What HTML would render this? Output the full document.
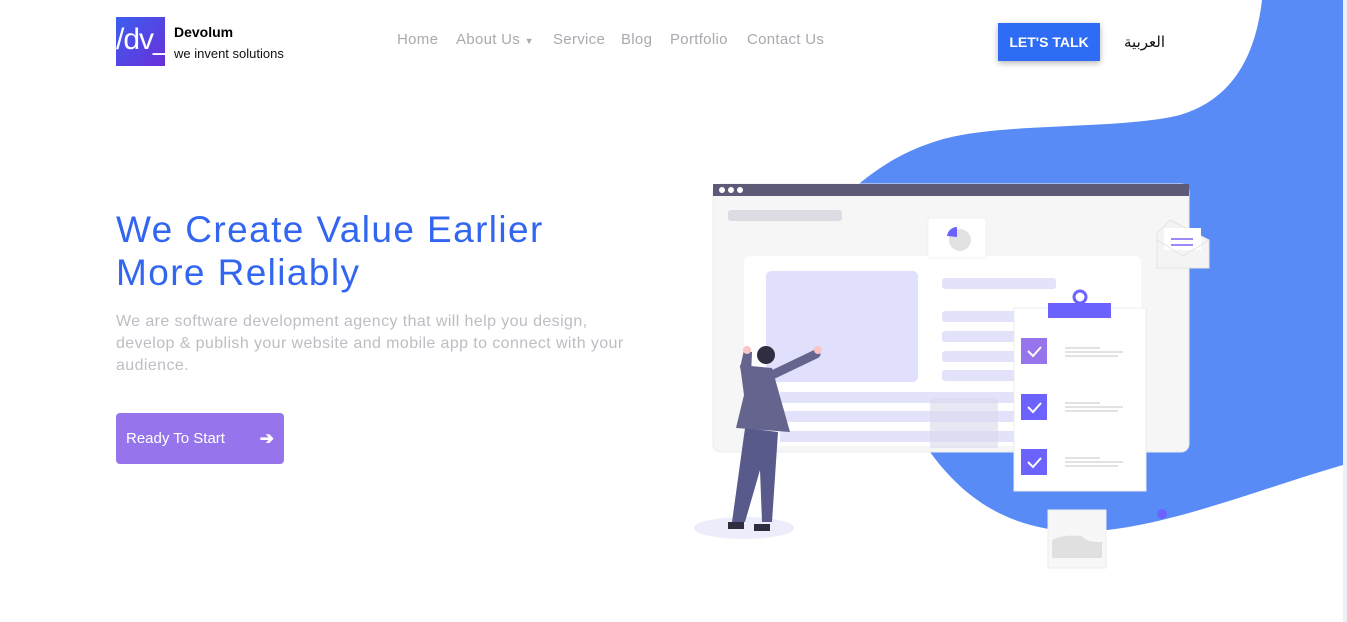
<!DOCTYPE html>
<html><head><meta charset="utf-8"><style>
*{margin:0;padding:0;box-sizing:border-box}
body{width:1347px;height:622px;overflow:hidden;background:#fff;font-family:"Liberation Sans",sans-serif;position:relative}
.abs{position:absolute}
.nav a{position:absolute;top:31px;font-size:15px;color:#a9a9b0;text-decoration:none;white-space:nowrap;letter-spacing:.3px}
</style></head><body>
<svg class="abs" style="left:0;top:0" width="1347" height="622">
<rect x="1343" y="0" width="4" height="622" fill="#eef0f4"/>
<path d="M1262,0 C1255,60 1230,100 1180,115 C1120,130 1000,122 940,140 C880,158 850,190 800,240 C760,320 860,410 930,452 C965,500 1010,530 1080,532 C1160,530 1250,492 1343,465 L1343,0 Z" fill="#598bf6"/>
</svg>
<div class="abs" style="left:116px;top:17px;width:49px;height:49px;background:linear-gradient(135deg,#3b5ef0,#6a2fd8);color:#fff;font-size:30px;line-height:46px;letter-spacing:-1px;overflow:hidden">/dv_</div>
<div class="abs" style="left:174px;top:24px;font-size:14px;font-weight:bold;color:#000">Devolum</div>
<div class="abs" style="left:174px;top:46px;font-size:13px;color:#111">we invent solutions</div>
<div class="nav">
<a style="left:397px">Home</a>
<a style="left:456px">About Us <span style="font-size:9px">▼</span></a>
<a style="left:553px">Service</a>
<a style="left:621px">Blog</a>
<a style="left:670px">Portfolio</a>
<a style="left:747px">Contact Us</a>
</div>
<div class="abs" style="left:998px;top:23px;width:102px;height:38px;background:#2f6cf5;color:#fff;font-weight:bold;font-size:14px;text-align:center;line-height:38px;box-shadow:0 2px 6px rgba(0,0,0,.3)">LET'S TALK</div>
<div class="abs" style="left:1124px;top:33px;font-size:15px;color:#111;font-family:'DejaVu Sans',sans-serif">العربية</div>
<div class="abs" style="left:116px;top:208px;font-size:37px;line-height:43px;color:#3366f0;letter-spacing:1.4px;white-space:nowrap">We Create Value Earlier<br>More Reliably</div>
<div class="abs" style="left:116px;top:311px;width:520px;font-size:16px;line-height:22px;color:#bdbdc4;letter-spacing:.4px">We are software development agency that will help you design, develop &amp; publish your website and mobile app to connect with your audience.</div>
<div class="abs" style="left:116px;top:413px;width:168px;height:51px;background:#9674ec;border-radius:4px;color:#fff;font-size:15px;line-height:51px;padding-left:10px">Ready To Start<span style="position:absolute;right:10px;font-weight:bold;font-size:17px">➔</span></div>
<svg class="abs" style="left:690px;top:170px" width="540" height="400">
<rect x="23" y="14" width="476" height="268" rx="8" fill="#f6f6f6" stroke="#ececec"/>
<rect x="23" y="14" width="476" height="12" fill="#5d5a77"/>
<circle cx="32" cy="20" r="3" fill="#fff"/><circle cx="41" cy="20" r="3" fill="#fff"/><circle cx="50" cy="20" r="3" fill="#fff"/>
<rect x="38" y="40" width="114" height="11" rx="3" fill="#dcdce2"/>
<rect x="54" y="86" width="397" height="190" rx="6" fill="#fff"/>
<rect x="76" y="101" width="152" height="111" rx="5" fill="#e0e0fc"/>
<rect x="252" y="108" width="114" height="11" rx="3" fill="#e2e2fb"/>
<rect x="252" y="141" width="80" height="11" rx="3" fill="#e2e2fb"/>
<rect x="252" y="161" width="80" height="11" rx="3" fill="#e2e2fb"/>
<rect x="252" y="181" width="80" height="11" rx="3" fill="#e2e2fb"/>
<rect x="252" y="200" width="80" height="11" rx="3" fill="#e2e2fb"/>
<rect x="90" y="222" width="240" height="11" fill="#e2e2fb"/>
<rect x="90" y="241" width="240" height="11" fill="#e2e2fb"/>
<rect x="90" y="261" width="240" height="11" fill="#e2e2fb"/>
<rect x="240" y="228" width="68" height="50" fill="#d8d8ef" opacity=".6"/>
<rect x="238" y="48" width="58" height="40" fill="#fff" stroke="#f0f0f0"/>
<circle cx="270" cy="70" r="11" fill="#e2e2e2"/><path d="M267,67 L267,57 A10,10 0 0 0 257,66 Z" fill="#6c63ff"/>
<path d="M467,63 L480,50 L519,70 L519,98 L467,98 Z" fill="#f4f4f4" stroke="#e4e4e4"/>
<rect x="474" y="58" width="37" height="22" fill="#fff"/>
<rect x="481" y="68" width="22" height="2" fill="#9a8cff"/><rect x="481" y="74" width="22" height="2" fill="#9a8cff"/>
<path d="M467,70 L493,86 L519,70" fill="none" stroke="#e4e4e4"/>
<rect x="324" y="138" width="132" height="183" fill="#fff" stroke="#ececec"/>
<rect x="358" y="133" width="63" height="15" fill="#6c63ff"/>
<circle cx="390" cy="127" r="6" fill="none" stroke="#6c63ff" stroke-width="3"/>
<rect x="331" y="168" width="26" height="26" fill="#9674ec"/>
<rect x="331" y="224" width="26" height="26" fill="#6c63ff"/>
<rect x="331" y="279" width="26" height="26" fill="#6c63ff"/>
<path d="M338,181 l5,5 l8,-9 M338,237 l5,5 l8,-9 M338,292 l5,5 l8,-9" fill="none" stroke="#fff" stroke-width="2"/>
<g fill="#e2e2e2"><rect x="375" y="177" width="35" height="2"/><rect x="375" y="181" width="58" height="2"/><rect x="375" y="185" width="53" height="2"/>
<rect x="375" y="232" width="35" height="2"/><rect x="375" y="236" width="58" height="2"/><rect x="375" y="240" width="53" height="2"/>
<rect x="375" y="287" width="35" height="2"/><rect x="375" y="291" width="58" height="2"/><rect x="375" y="295" width="53" height="2"/></g>
<circle cx="472" cy="344" r="5" fill="#6c63ff"/>
<rect x="358" y="340" width="58" height="58" fill="#f7f7f7" stroke="#eee"/>
<path d="M362,388 L362,370 C375,364 385,366 392,366 C396,372 405,372 412,372 L412,388 Z" fill="#e0e0e0"/>
<ellipse cx="54" cy="358" rx="50" ry="11" fill="#ececfa"/>
<path d="M55,258 L88,262 L82,352 L72,352 L70,300 L55,352 L42,352 Z" fill="#575a8a"/>
<path d="M50,195 L82,198 L100,262 L46,258 L54,225 Z" fill="#65648e"/>
<path d="M50,198 L54,180 L62,182 L61,206 Z" fill="#65648e"/>
<path d="M80,206 L126,184" stroke="#65648e" stroke-width="9" stroke-linecap="round"/>
<circle cx="76" cy="185" r="9" fill="#2f2e41"/>
<circle cx="57" cy="180" r="4" fill="#f8c4c4"/><circle cx="128" cy="180" r="4" fill="#f8c4c4"/>
<rect x="38" y="352" width="16" height="7" fill="#2f2e41"/><rect x="64" y="354" width="16" height="7" fill="#2f2e41"/>
</svg>
</body></html>
